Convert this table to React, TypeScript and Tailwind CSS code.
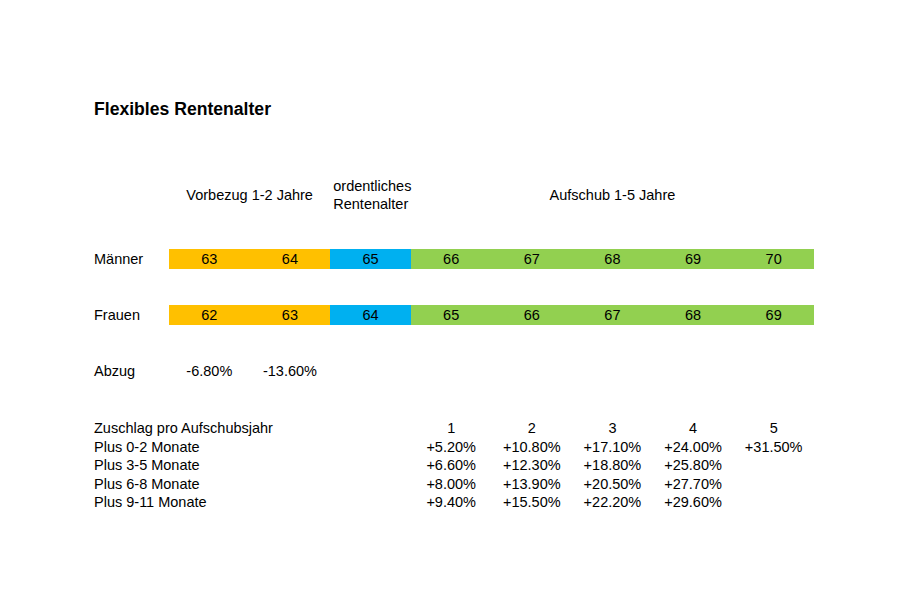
import React from 'react'

const maenner = [63, 64, 65, 66, 67, 68, 69, 70];
const frauen = [62, 63, 64, 65, 66, 67, 68, 69];

// Excel-Standardfarben: 2x Vorbezug, 1x ordentlich, 5x Aufschub
const cellColors = [
    "bg-[#ffc000]", "bg-[#ffc000]", "bg-[#00b0f0]",
    "bg-[#92d050]", "bg-[#92d050]", "bg-[#92d050]", "bg-[#92d050]", "bg-[#92d050]"
];

const zuschlag = [
    { label: "Plus 0-2 Monate", values: ["+5.20%", "+10.80%", "+17.10%", "+24.00%", "+31.50%"] },
    { label: "Plus 3-5 Monate", values: ["+6.60%", "+12.30%", "+18.80%", "+25.80%", ""] },
    { label: "Plus 6-8 Monate", values: ["+8.00%", "+13.90%", "+20.50%", "+27.70%", ""] },
    { label: "Plus 9-11 Monate", values: ["+9.40%", "+15.50%", "+22.20%", "+29.60%", ""] },
];

const grid = "grid grid-cols-[75px_repeat(8,80.625px)]";

const AgeRow = ({ label, ages }: { label: string; ages: number[] }) => (
    <div className={`${grid} h-[19px] leading-[20px]`}>
        <span>{label}</span>
        {ages.map((a, i) => (
            <span key={i} className={`text-center ${cellColors[i]}`}>{a}</span>
        ))}
    </div>
);

const App = () => {
    return (
        <div className="w-[910px] h-[601px] bg-white text-black text-[14.5px] font-['Liberation_Sans',Arial,sans-serif] pl-[94px] pt-[99px]">

            {/* Titel */}
            <h1 className="h-[20px] leading-[20px] text-[17.6px] font-bold">Flexibles Rentenalter</h1>

            {/* Kopfzeile */}
            <div className={`${grid} mt-[57px] h-[37px] items-center leading-[18px]`}>
                <span />
                <span className="col-span-2 text-center">Vorbezug 1-2 Jahre</span>
                <span className="pl-[3px] whitespace-nowrap">ordentliches<br />Rentenalter</span>
                <span className="col-span-5 text-center">Aufschub 1-5 Jahre</span>
            </div>

            <div className="mt-[36px]">
                <AgeRow label="Männer" ages={maenner} />
            </div>
            <div className="mt-[37px]">
                <AgeRow label="Frauen" ages={frauen} />
            </div>

            {/* Abzug */}
            <div className={`${grid} mt-[37px] h-[19px] leading-[21px]`}>
                <span>Abzug</span>
                <span className="text-center">-6.80%</span>
                <span className="text-center">-13.60%</span>
            </div>

            {/* Zuschlag */}
            <div className="mt-[38px]">
                <div className={`${grid} h-[18.5px] leading-[20px]`}>
                    <span className="col-span-4 whitespace-nowrap">Zuschlag pro Aufschubsjahr</span>
                    {[1, 2, 3, 4, 5].map(n => (
                        <span key={n} className="text-center">{n}</span>
                    ))}
                </div>
                {zuschlag.map(row => (
                    <div key={row.label} className={`${grid} h-[18.5px] leading-[20px]`}>
                        <span className="col-span-4 whitespace-nowrap">{row.label}</span>
                        {row.values.map((v, i) => (
                            <span key={i} className="text-center">{v}</span>
                        ))}
                    </div>
                ))}
            </div>

        </div>
    )
}

export default App
